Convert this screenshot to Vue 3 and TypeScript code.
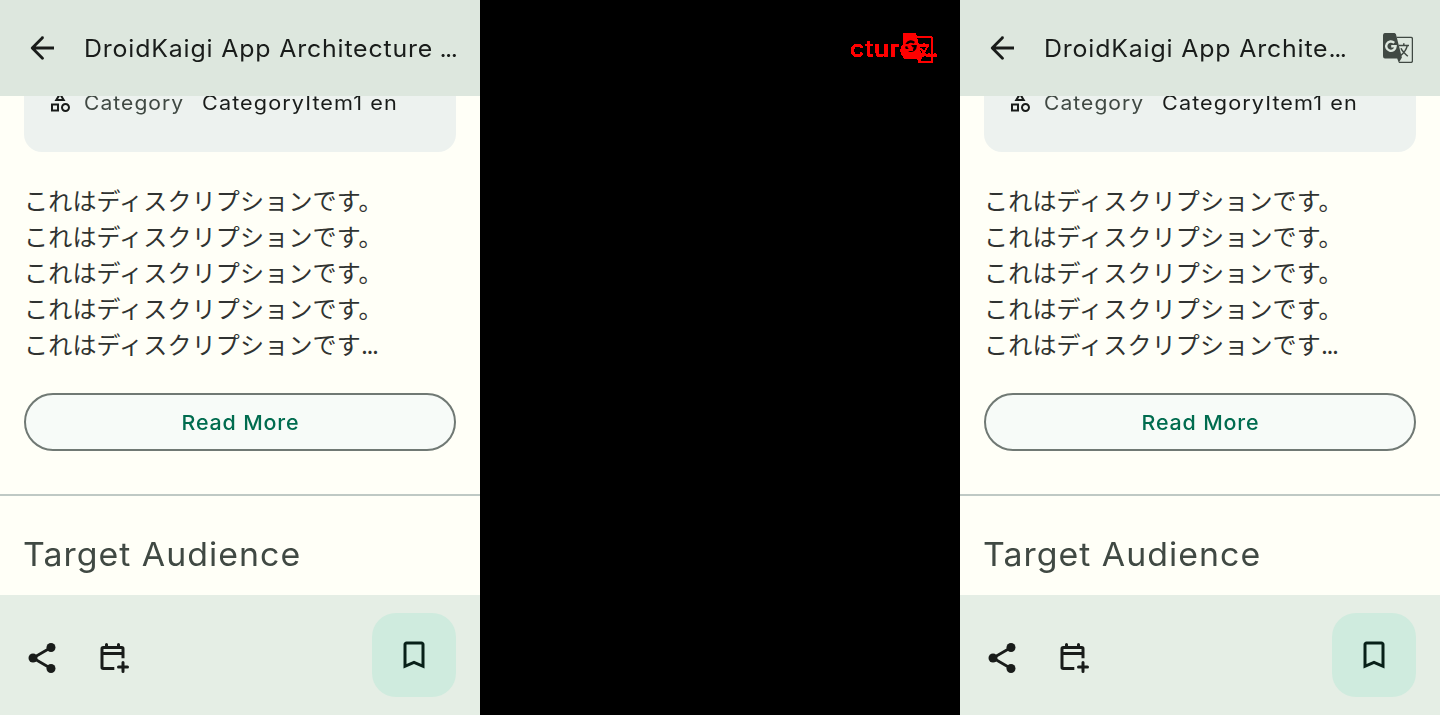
<script setup lang="ts">
import { h, type FunctionalComponent } from 'vue'

interface Screen {
  id: string
  title: string
  translatable: boolean
}

const screens: Screen[] = [
  { id: 'before', title: 'DroidKaigi App Architecture', translatable: false },
  { id: 'after', title: 'DroidKaigi App Archite', translatable: true },
]

const description: string[] = [
  'これはディスクリプションです。',
  'これはディスクリプションです。',
  'これはディスクリプションです。',
  'これはディスクリプションです。',
]

// Two overlapping sheets: a solid one with a G, an outlined one with a glyph.
const TranslateIcon: FunctionalComponent<{ cutout: string }> = (props) =>
  h('svg', { viewBox: '0 0 30 30' }, [
    h('path', {
      d: 'M13.6 4.4H28a1.4 1.4 0 0 1 1.4 1.4V28a1.4 1.4 0 0 1-1.4 1.4H16',
      fill: 'none', stroke: 'currentColor', 'stroke-width': 1.3,
    }),
    h('path', { d: 'M2.4 0H11.6L12.9 1 18.9 24.6 15.8 29.8 14.2 25.4H2.4A2.2 2.2 0 0 1 0 23.2V2.2A2.2 2.2 0 0 1 2.4 0z' }),
    h('path', {
      d: 'M11.2 9.8A4.7 4.7 0 1 0 12.6 13.3H8.2',
      fill: 'none', stroke: props.cutout, 'stroke-width': 2.4,
    }),
    h('path', {
      d: 'M15.8 12.6H26M20.8 10.2V12.6M24.2 12.9C23.3 16.6 20.8 20 17.8 22.4M18 15.2C19.4 18.4 22 20.8 24.8 23.2',
      fill: 'none', stroke: 'currentColor', 'stroke-width': 1.5,
    }),
  ])
TranslateIcon.props = ['cutout']
</script>

<template>
  <main class="board">
    <section v-for="screen in screens" :key="screen.id" class="phone" :class="screen.id">
      <header class="topbar">
        <svg class="icon" viewBox="0 0 24 24">
          <path d="M20 12H5.8M12.3 5.1 5.5 12l6.8 6.9" fill="none" stroke="currentColor" stroke-width="1.9" stroke-linejoin="round" />
          <circle cx="12.3" cy="5.1" r="0.95" />
          <circle cx="12.3" cy="18.9" r="0.95" />
        </svg>
        <h1 class="title">
          <span class="wide">{{ screen.title }}<span class="dots" :class="{ spaced: !screen.translatable }">...</span></span>
        </h1>
        <TranslateIcon v-if="screen.translatable" class="translate" cutout="#dde7de" />
      </header>

      <div class="content">
        <div class="card">
          <svg class="category-icon" viewBox="0 0 24 24">
            <path d="M12 2l-5.5 9h11L12 2zm0 3.84L13.93 9h-3.87L12 5.84zM17.5 13c-2.49 0-4.5 2.01-4.5 4.5s2.01 4.5 4.5 4.5 4.5-2.01 4.5-4.5-2.01-4.5-4.5-4.5zm0 7c-1.38 0-2.5-1.12-2.5-2.5s1.12-2.5 2.5-2.5 2.5 1.12 2.5 2.5-1.12 2.5-2.5 2.5zM3 21.5h8v-8H3v8zm2-6h4v4H5v-4z" />
          </svg>
          <span class="label"><span class="wide">Category</span></span>
          <span class="value wide">CategoryItem1 en</span>
        </div>

        <div class="description">
          <p v-for="(line, i) in description" :key="i">{{ line }}</p>
          <p>これはディスクリプションです<span class="dots small">...</span></p>
        </div>

        <button class="more" type="button"><span class="wide centered">Read More</span></button>
        <div class="divider"></div>
        <h2 class="audience"><span class="wide">Target Audience</span></h2>
      </div>

      <footer class="bottombar">
        <svg class="icon" viewBox="0 0 24 24">
          <path d="M6 12 18 5M6 12l12 7" fill="none" stroke="currentColor" stroke-width="1.8" />
          <circle cx="18" cy="5" r="3" />
          <circle cx="6" cy="12" r="3" />
          <circle cx="18" cy="19" r="3" />
        </svg>
        <svg class="icon calendar" viewBox="0 0 24 24">
          <path d="M12.2 19H4.8a.8.8 0 0 1-.8-.8V5.8a.8.8 0 0 1 .8-.8h12.4a.8.8 0 0 1 .8.8v6.4M4 9h14" fill="none" stroke="currentColor" stroke-width="2" />
          <path d="M7 5V3M15 5V3M18 15v6M15 18h6" fill="none" stroke="currentColor" stroke-width="2" stroke-linecap="round" />
        </svg>
        <button class="fab" type="button" aria-label="Bookmark">
          <svg class="icon" viewBox="0 0 24 24">
            <path d="M17 3H7c-1.1 0-1.99.9-1.99 2L5 21l7-3 7 3V5c0-1.1-.9-2-2-2zm0 15l-5-2.18L7 18V5h10v13z" />
          </svg>
        </button>
      </footer>
    </section>

    <section class="diff">
      <svg class="filters" width="0" height="0">
        <filter id="hard-edge" x="0" y="0" width="1" height="1">
          <feComponentTransfer><feFuncA type="discrete" tableValues="0 1 1 1 1 1 1 1" /></feComponentTransfer>
        </filter>
      </svg>
      <div class="changes">
        <TranslateIcon class="changed-icon" cutout="#000" />
        <span class="wide">cture<span class="dots spaced">...</span></span>
      </div>
    </section>
  </main>
</template>

<style>
body {
  margin: 0;
  background: #000;
}
</style>

<style scoped>
.board {
  display: flex;
  width: 1440px;
  height: 715px;
  overflow: hidden;
  background: #000;
  font-family: Inter, "Noto Sans CJK JP", sans-serif;
  color: #191c1a;
}
.phone {
  display: flex;
  flex-direction: column;
  width: 480px;
  height: 715px;
  background: #fffff7;
}
.before { order: 1; }
.diff { order: 2; }
.after { order: 3; }
svg {
  display: block;
  flex: none;
  fill: currentColor;
}
.wide {
  display: inline-block;
  transform: scaleX(1.045);
  transform-origin: left center;
}
.wide.centered {
  transform-origin: center;
}
.icon {
  width: 36px;
  height: 36px;
}
.topbar {
  display: flex;
  align-items: center;
  flex: none;
  box-sizing: border-box;
  height: 96px;
  padding: 0 27px 0 24px;
  background: #dde7de;
}
.title {
  flex: 1;
  margin: 2px 0 0 24px;
  font-size: 23.8px;
  font-weight: 400;
  line-height: 36px;
  letter-spacing: 0.8px;
  white-space: nowrap;
}
.dots {
  letter-spacing: -1.4px;
}
.dots.spaced {
  margin-left: 6px;
}
.translate {
  width: 30px;
  height: 30px;
  color: #404943;
}
.content {
  flex: 1;
  min-height: 0;
  overflow: hidden;
}
.card {
  display: flex;
  align-items: flex-start;
  box-sizing: border-box;
  height: 66px;
  margin: -10px 24px 0;
  padding: 4px 24px 0;
  border-radius: 0 0 18px 18px;
  background: #edf2ef;
  font-size: 20px;
  line-height: 26px;
  letter-spacing: 1px;
  white-space: nowrap;
}
.category-icon {
  width: 24px;
  height: 24px;
}
.label {
  width: 118px;
  margin-left: 12px;
  color: #404943;
}
.label .wide {
  transform: scaleX(1.053);
}
.value.wide {
  transform: scaleX(1.083);
}
.description {
  margin: 30px 24px 0;
  color: #303331;
  font-family: "Noto Sans CJK JP", sans-serif;
  font-size: 24px;
  line-height: 36px;
  letter-spacing: 0.19px;
}
.description p {
  height: 36px;
  margin: 0;
  white-space: nowrap;
}
.dots.small {
  font-family: Inter, sans-serif;
}
.more {
  display: flex;
  align-items: center;
  justify-content: center;
  box-sizing: border-box;
  width: 432px;
  height: 58px;
  margin: 31px 24px 0;
  padding: 0;
  border: 2px solid #707974;
  border-radius: 29px;
  background: #f7fbf8;
  color: #006c4f;
  font-family: inherit;
  font-size: 20.5px;
  font-weight: 450;
  letter-spacing: 0.8px;
}
.divider {
  height: 2px;
  margin-top: 43px;
  background: #bfc9c4;
}
.audience {
  margin: 34px 24px 0 23px;
  color: #404943;
  font-size: 33px;
  font-weight: 400;
  line-height: 48px;
  letter-spacing: 1px;
  white-space: nowrap;
}
.audience .wide {
  transform: scaleX(1.026);
}
.bottombar {
  display: flex;
  flex: none;
  box-sizing: border-box;
  height: 120px;
  padding: 18px 24px;
  background: #e5eee5;
}
.bottombar > .icon {
  margin-top: 27px;
}
.bottombar > .calendar {
  margin-left: 36px;
}
.fab {
  display: grid;
  place-items: center;
  width: 84px;
  height: 84px;
  margin-left: auto;
  padding: 0;
  border: 0;
  border-radius: 24px;
  background: #cfebde;
  color: #092019;
}
.diff {
  width: 480px;
  height: 715px;
  background: #000;
  color: #f00;
}
.filters {
  position: absolute;
}
.changes {
  position: relative;
  box-sizing: border-box;
  height: 96px;
  padding: 31px 0 0 370px;
  font-size: 24px;
  font-weight: 500;
  line-height: 36px;
  letter-spacing: 0.5px;
  filter: url(#hard-edge);
}
.changes .dots {
  margin-left: 4px;
}
.changed-icon {
  position: absolute;
  left: 423px;
  top: 33px;
  width: 30px;
  height: 30px;
}
</style>
